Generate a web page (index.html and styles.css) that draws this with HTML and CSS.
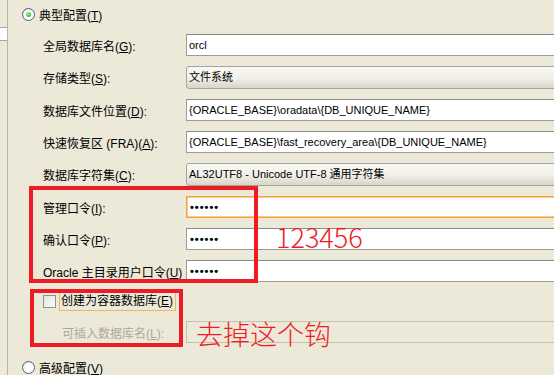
FILE: index.html
```html
<!DOCTYPE html>
<html lang="zh-CN">
<head>
  <meta charset="UTF-8" />
  <title>典型配置</title>
  <link rel="stylesheet" href="styles.css">
</head>
<body>
  <div class="window">
    <div class="side">
      <div class="side-item"></div>
    </div>

    <div class="content">
      <div class="option">
        <span class="radio checked"></span>
        <span>典型配置(<u>T</u>)</span>
      </div>

      <div class="form">
        <div class="field">
          <span class="label">全局数据库名(<u>G</u>):</span>
          <div class="text-box">orcl</div>
        </div>
        <div class="field">
          <span class="label">存储类型(<u>S</u>):</span>
          <div class="combo">文件系统</div>
        </div>
        <div class="field">
          <span class="label">数据库文件位置(<u>D</u>):</span>
          <div class="text-box">{ORACLE_BASE}\oradata\{DB_UNIQUE_NAME}</div>
        </div>
        <div class="field">
          <span class="label">快速恢复区 (FRA)(<u>A</u>):</span>
          <div class="text-box">{ORACLE_BASE}\fast_recovery_area\{DB_UNIQUE_NAME}</div>
        </div>
        <div class="field">
          <span class="label">数据库字符集(<u>C</u>):</span>
          <div class="combo">AL32UTF8 - Unicode UTF-8 通用字符集</div>
        </div>
        <div class="field">
          <span class="label">管理口令(<u>I</u>):</span>
          <div class="text-box password focused">••••••</div>
        </div>
        <div class="field">
          <span class="label">确认口令(<u>P</u>):</span>
          <div class="text-box password">••••••</div>
        </div>
        <div class="field">
          <span class="label">Oracle 主目录用户口令(<u>U</u>)</span>
          <div class="text-box password">••••••</div>
        </div>
      </div>

      <div class="check-row">
        <span class="checkbox"></span>
        <span class="focus-text">创建为容器数据库(<u>E</u>)</span>
      </div>

      <div class="field plug">
        <span class="label disabled">可插入数据库名(<u>L</u>):</span>
        <div class="text-box off"></div>
      </div>

      <div class="option advanced">
        <span class="radio"></span>
        <span>高级配置(<u>V</u>)</span>
      </div>
    </div>

    <!-- hand-drawn notes on top of the screenshot -->
    <div class="mark mark-pw"></div>
    <div class="mark mark-cdb"></div>
    <div class="note note-pw">123456</div>
    <div class="note note-cdb">去掉这个钩</div>
  </div>
</body>
</html>
```

FILE: styles.css
```css
body {
  margin: 0;
  background: #ece9d8;
  overflow: hidden;
}

.window {
  position: relative;
  display: flex;
  width: 554px;
  height: 375px;
  overflow: hidden;
  font-family: "Liberation Sans", "Noto Sans CJK SC", sans-serif;
  font-size: 12px;
  color: #000;
}

.side {
  width: 7px;
  flex: none;
  border-right: 1px solid #b9b6a6;
}

.side-item {
  margin-top: 27px;
  height: 12px;
  background: #fff;
  border-top: 1px solid #a7a7a7;
  border-bottom: 1px solid #a7a7a7;
}

.content {
  flex: 1;
  padding-left: 14px;
}

.option {
  display: flex;
  align-items: center;
  gap: 4px;
  height: 14px;
  margin-top: 7px;
}

.option.advanced {
  margin-top: 17px;
}

.radio {
  width: 11px;
  height: 11px;
  border: 1px solid #4d6185;
  border-radius: 50%;
  background: radial-gradient(circle at 60% 60%, #fff 40%, #dcdad0);
  position: relative;
}

.radio.checked::after {
  content: "";
  position: absolute;
  left: 3px;
  top: 3px;
  width: 5px;
  height: 5px;
  border-radius: 50%;
  background: radial-gradient(circle at 35% 35%, #a6f08c, #21a121);
}

.form {
  display: flex;
  flex-direction: column;
  gap: 10px;
  margin: 13px 0 0 21px;
}

.field {
  display: flex;
  align-items: center;
}

.label {
  width: 143px;
  flex: none;
  white-space: nowrap;
}

.label.disabled {
  color: #aca899;
}

.text-box,
.combo {
  width: 400px;
  flex: none;
  box-sizing: border-box;
  height: 22px;
  line-height: 20px;
  padding-left: 2px;
  font-size: 11px;
  white-space: nowrap;
  background: #fff;
  border: 1px solid #9c9c9c;
  border-top-color: #8a8a8a;
}

.combo {
  height: 23px;
  border-radius: 3px;
  border-color: #a3a3a3;
  background: linear-gradient(#f9f8f4, #f0efe8 55%, #d8d5c7);
}

.password {
  font-weight: bold;
  letter-spacing: 1px;
  padding-left: 3px;
}

.focused {
  border-color: #f1a33f;
  box-shadow: inset 0 0 0 1px #fbc986;
}

.check-row {
  display: flex;
  align-items: center;
  gap: 3px;
  height: 20px;
  margin: 9px 0 0 21px;
}

.checkbox {
  width: 11px;
  height: 11px;
  border: 1px solid #8f9199;
  background: linear-gradient(135deg, #e3e2dc, #fbfbf9);
}

.focus-text {
  border: 1px solid #f0b75a;
  line-height: 17px;
  padding: 0 2px 0 1px;
}

.field.plug {
  margin: 10px 0 0 21px;
}

.field.plug .label {
  padding-left: 19px;
  width: 124px;
}

.text-box.off {
  background: #ece9d8;
  border-color: #c4c1b1;
}

.mark {
  position: absolute;
  border: 4px solid #ed1c24;
  box-sizing: border-box;
}

.mark-pw {
  left: 29px;
  top: 186px;
  width: 229px;
  height: 97px;
}

.mark-cdb {
  left: 30px;
  top: 289px;
  width: 153px;
  height: 58px;
}

.note {
  position: absolute;
  color: #ee1c25;
  font-family: "Noto Sans CJK SC", sans-serif;
  font-weight: 300;
  font-size: 27px;
  line-height: 1;
}

.note-pw {
  left: 276px;
  top: 223px;
}

.note-cdb {
  left: 196px;
  top: 320px;
}
```
